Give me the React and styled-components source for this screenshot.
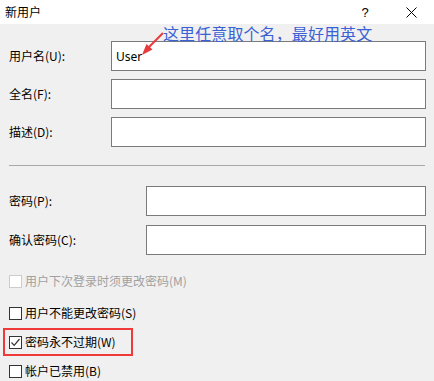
import React from 'react';
import styled, { createGlobalStyle } from 'styled-components';

const GlobalStyle = createGlobalStyle`
  html, body {
    margin: 0;
    padding: 0;
    background: #f0f0f0;
  }
  body {
    font-family: "Noto Sans CJK SC", "Liberation Sans", sans-serif;
    font-size: 12px;
    color: #000;
  }
`;

const Window = styled.div`
  width: 434px;
  height: 381px;
  display: flex;
  flex-direction: column;
  overflow: hidden;
  background: #f0f0f0;
`;

const TitleBar = styled.div`
  height: 24px;
  background: #ffffff;
  display: flex;
  align-items: center;
  justify-content: space-between;
  padding-left: 5px;
  flex-shrink: 0;
`;

const Title = styled.span`
  font-size: 12px;
  line-height: 24px;
`;

const TitleButtons = styled.div`
  display: flex;
  align-items: center;
  height: 100%;
`;

const TitleButton = styled.div`
  width: ${p => p.$w}px;
  height: 100%;
  display: flex;
  align-items: center;
  justify-content: center;
  font-family: "Liberation Sans", sans-serif;
  font-size: 13px;
`;

const Body = styled.div`
  position: relative;
  flex: 1;
  padding: 17px 8px 0 9px;
`;

const Group = styled.div`
  display: flex;
  flex-direction: column;
  gap: ${p => p.$gap}px;
  margin-top: ${p => p.$top || 0}px;
`;

const Row = styled.div`
  display: grid;
  grid-template-columns: ${p => p.$label}px 1fr;
  align-items: center;
`;

const Label = styled.label`
  font-size: 12px;
  line-height: 16px;
`;

const Input = styled.div`
  height: 30px;
  box-sizing: border-box;
  border: 1px solid #7a7a7a;
  background: #ffffff;
  display: flex;
  align-items: center;
  padding-left: 4px;
  font-family: "Noto Sans", "Liberation Sans", sans-serif;
  font-size: 12px;
`;

const Divider = styled.div`
  height: 1px;
  background: #a8a8a8;
  margin-top: 18px;
  margin-right: 1px;
`;

const Checks = styled.div`
  display: flex;
  flex-direction: column;
  gap: 13px;
  margin-top: 18px;
`;

const CheckRow = styled.div`
  display: flex;
  align-items: center;
  gap: 3px;
  height: 16px;
  width: fit-content;
  padding-right: ${p => (p.$highlight ? 11 : 0)}px;
  margin-bottom: ${p => p.$extra || 0}px;
  color: ${p => (p.$disabled ? '#a0a0a0' : '#000')};
  outline: ${p => (p.$highlight ? '2px solid #f03a3a' : 'none')};
  outline-offset: 4px;
  font-size: 12px;
  line-height: 16px;
`;

const Box = styled.span`
  width: 13px;
  height: 13px;
  box-sizing: border-box;
  border: 1px solid ${p => (p.$disabled ? '#cccccc' : '#333333')};
  background: #ffffff;
  display: flex;
  align-items: center;
  justify-content: center;
  flex-shrink: 0;
`;

const Note = styled.div`
  position: absolute;
  left: 163px;
  top: 0px;
  font-size: 16px;
  line-height: 18px;
  color: #3a62d6;
  white-space: nowrap;
  letter-spacing: 0.1px;
`;

const Arrow = styled.svg`
  position: absolute;
  left: 138px;
  top: 8px;
`;

const Check = ({ disabled, checked, highlight, extra, children }) => (
  <CheckRow $disabled={disabled} $highlight={highlight} $extra={extra}>
    <Box $disabled={disabled}>
      {checked && (
        <svg width="11" height="11" viewBox="0 0 11 11">
          <path d="M1.5 5.5 L4.2 8.3 L9.5 2" fill="none" stroke="#333" strokeWidth="1.2" />
        </svg>
      )}
    </Box>
    <span>{children}</span>
  </CheckRow>
);

export default function App() {
  return (
    <Window>
      <GlobalStyle />
      <TitleBar>
        <Title>新用户</Title>
        <TitleButtons>
          <TitleButton $w={46}>?</TitleButton>
          <TitleButton $w={46}>
            <svg width="11" height="11" viewBox="0 0 11 11">
              <path d="M0.5 0.5 L10.5 10.5 M10.5 0.5 L0.5 10.5" stroke="#000" strokeWidth="1" />
            </svg>
          </TitleButton>
        </TitleButtons>
      </TitleBar>
      <Body>
        <Group $gap={8}>
          <Row $label={102}>
            <Label>用户名(U):</Label>
            <Input>User</Input>
          </Row>
          <Row $label={102}>
            <Label>全名(F):</Label>
            <Input />
          </Row>
          <Row $label={102}>
            <Label>描述(D):</Label>
            <Input />
          </Row>
        </Group>
        <Divider />
        <Group $gap={9} $top={20}>
          <Row $label={137}>
            <Label>密码(P):</Label>
            <Input />
          </Row>
          <Row $label={137}>
            <Label>确认密码(C):</Label>
            <Input />
          </Row>
        </Group>
        <Checks>
          <Check disabled extra={3}>用户下次登录时须更改密码(M)</Check>
          <Check>用户不能更改密码(S)</Check>
          <Check checked highlight>密码永不过期(W)</Check>
          <Check>帐户已禁用(B)</Check>
        </Checks>
        <Note>这里任意取个名，最好用英文</Note>
        <Arrow width="30" height="26" viewBox="0 0 30 26">
          <path d="M25 1 L11 15" stroke="#e8393b" strokeWidth="2" />
          <path d="M4 23 L8.5 12 L14.5 17.5 Z" fill="#e8393b" />
        </Arrow>
      </Body>
    </Window>
  );
}
